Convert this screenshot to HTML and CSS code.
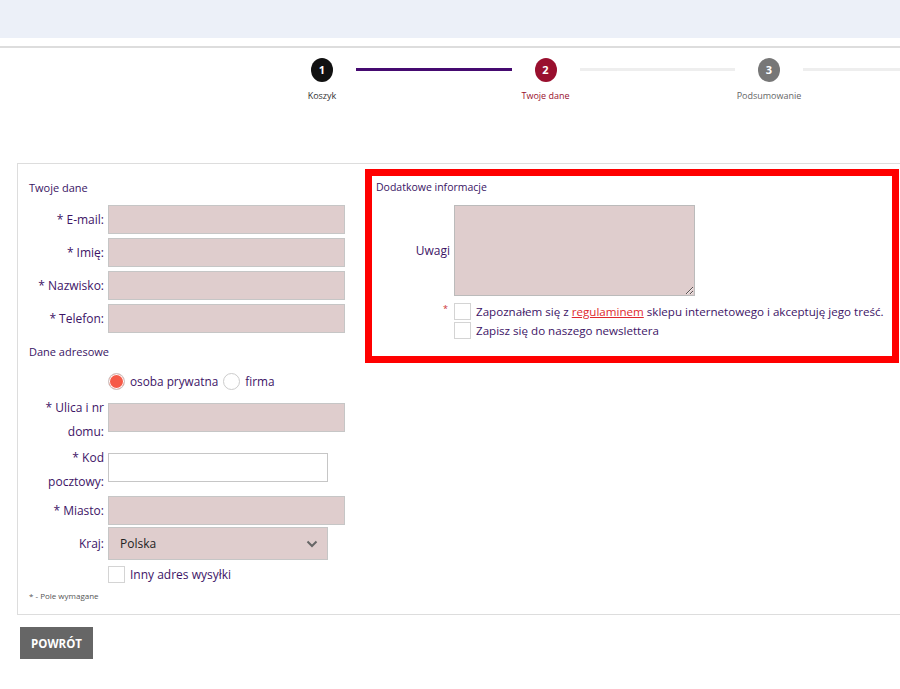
FILE: index.html
```html
<!DOCTYPE html>
<html lang="pl">
<head>
    <meta charset="UTF-8">
    <meta name="viewport" content="width=device-width, initial-scale=1.0">
    <title>Twoje dane</title>
    <link rel="stylesheet" href="styles.css">
</head>
<body>
    <div class="topbar"></div>

    <div class="page">
        <!-- Steps -->
        <div class="steps">
            <div class="step done">
                <span class="step-num">1</span>
                <span class="step-name">Koszyk</span>
            </div>
            <div class="step-line active"></div>
            <div class="step current">
                <span class="step-num">2</span>
                <span class="step-name">Twoje dane</span>
            </div>
            <div class="step-line"></div>
            <div class="step">
                <span class="step-num">3</span>
                <span class="step-name">Podsumowanie</span>
            </div>
            <div class="step-line"></div>
        </div>

        <form class="order-form" onsubmit="return false">
            <div class="form-box">
                <section class="col col-left">
                    <h3 class="col-title">Twoje dane</h3>
                    <div class="fields">
                        <label class="field-label" for="email">* E-mail:</label>
                        <input class="field-input" type="text" id="email">
                        <label class="field-label" for="imie">* Imię:</label>
                        <input class="field-input" type="text" id="imie">
                        <label class="field-label" for="nazwisko">* Nazwisko:</label>
                        <input class="field-input" type="text" id="nazwisko">
                        <label class="field-label" for="telefon">* Telefon:</label>
                        <input class="field-input" type="text" id="telefon">
                    </div>

                    <h3 class="col-title second">Dane adresowe</h3>
                    <div class="radios">
                        <label class="radio-item"><input type="radio" name="typ" checked><span>osoba prywatna</span></label>
                        <label class="radio-item"><input type="radio" name="typ"><span>firma</span></label>
                    </div>

                    <div class="fields address">
                        <label class="field-label" for="ulica">* Ulica i nr domu:</label>
                        <input class="field-input top" type="text" id="ulica">
                        <label class="field-label" for="kod">* Kod pocztowy:</label>
                        <input class="field-input top short white" type="text" id="kod">
                        <label class="field-label" for="miasto">* Miasto:</label>
                        <input class="field-input" type="text" id="miasto">
                        <label class="field-label" for="kraj">Kraj:</label>
                        <div class="select-wrap">
                            <select class="field-select" id="kraj">
                                <option>Polska</option>
                            </select>
                            <svg class="select-arrow" width="12" height="8" viewBox="0 0 12 8">
                                <path d="M1.5 1.5 L6 6 L10.5 1.5" fill="none" stroke="#666" stroke-width="2"/>
                            </svg>
                        </div>
                    </div>

                    <label class="check-item other-address"><input type="checkbox"><span>Inny adres wysyłki</span></label>
                    <p class="required-note">* - Pole wymagane</p>
                </section>

                <section class="col col-right">
                    <h3 class="col-title">Dodatkowe informacje</h3>
                    <div class="fields notes">
                        <label class="field-label" for="uwagi">Uwagi</label>
                        <textarea class="field-textarea" id="uwagi"></textarea>
                    </div>
                    <div class="agree-rows">
                        <span class="agree-star">*</span>
                        <label class="check-item"><input type="checkbox"><span>Zapoznałem się z <a href="#">regulaminem</a> sklepu internetowego i akceptuję jego treść.</span></label>
                        <span></span>
                        <label class="check-item"><input type="checkbox"><span>Zapisz się do naszego newslettera</span></label>
                    </div>
                </section>
            </div>

            <button class="btn-back" type="button">POWRÓT</button>
        </form>
    </div>
</body>
</html>
```

FILE: styles.css
```css
body {
    margin: 0;
    font-family: "Open Sans", Arial, sans-serif;
    color: #3d1466;
    background-color: #fff;
    overflow: hidden;
}

.topbar {
    height: 38px;
    background-color: #ecf0f8;
    border-bottom: 8px solid #fff;
}

.page {
    border-top: 2px solid #ddd;
    overflow: hidden;
}

/* Steps */
.steps {
    display: flex;
    align-items: flex-start;
    margin: 10px 0 0 288px;
    width: 1000px;
}

.step {
    flex: 0 0 68px;
    display: flex;
    flex-direction: column;
    align-items: center;
}

.step-num {
    width: 22px;
    height: 24px;
    border-radius: 50%;
    background-color: #777;
    color: #fff;
    font-size: 11px;
    font-weight: bold;
    line-height: 24px;
    text-align: center;
}

.step-name {
    margin-top: 8px;
    font-size: 9px;
    line-height: 12px;
    color: #666;
    white-space: nowrap;
}

.step.done .step-num {
    background-color: #111;
}

.step.done .step-name {
    color: #333;
}

.step.current .step-num {
    background-color: #990f2e;
}

.step.current .step-name {
    color: #990f2e;
}

.step-line {
    flex: 0 0 155.5px;
    height: 3px;
    margin-top: 10px;
    background-color: #eee;
}

.step-line.active {
    background-color: #450a70;
}

/* Form */
.order-form {
    padding: 0 0 40px 17px;
    margin-top: 61px;
}

.form-box {
    display: flex;
    align-items: flex-start;
    width: 1000px;
    border: 1px solid #ddd;
}

.col-left {
    flex: 0 0 336px;
    padding: 17px 0 13px 11px;
}

.col-right {
    flex: 0 0 512px;
    min-width: 0;
    margin-top: 5px;
    border: 7px solid #f00;
    padding: 4px 4px 17px 4px;
}

.col-title {
    margin: 0 0 10px;
    font-size: 11px;
    line-height: 14px;
    font-weight: normal;
    color: #3a1464;
}

.col-right .col-title {
    font-size: 10.5px;
}

.col-title.second {
    margin-top: 12px;
}

.fields {
    display: grid;
    grid-template-columns: 75px 237px;
    column-gap: 4px;
    row-gap: 4px;
    align-items: center;
}

.fields.address {
    row-gap: 2px;
    margin-top: 4px;
}

.field-label {
    text-align: right;
    font-size: 12px;
    line-height: 24px;
}

.field-input {
    box-sizing: border-box;
    height: 29px;
    width: 100%;
    border: 1px solid #c6c6c6;
    background-color: #dfcdcd;
    font-family: inherit;
}

.field-input.top {
    align-self: start;
    margin-top: 7px;
}

.field-input.short {
    width: 220px;
}

.field-input.white {
    background-color: #fff;
}

.select-wrap {
    position: relative;
    width: 220px;
}

.field-select {
    appearance: none;
    box-sizing: border-box;
    width: 100%;
    height: 33px;
    padding: 0 11px;
    border: 1px solid #c6c6c6;
    background-color: #dfcdcd;
    font-family: inherit;
    font-size: 12px;
    color: #222;
}

.select-arrow {
    position: absolute;
    right: 10px;
    top: 13px;
}

.radios {
    display: flex;
    align-items: center;
    gap: 5px;
    height: 22px;
    margin: 11px 0 0 79px;
    font-size: 11.8px;
}

.radio-item {
    display: flex;
    align-items: center;
    gap: 5px;
}

.radio-item input {
    appearance: none;
    margin: 0;
    width: 17px;
    height: 17px;
    border: 1px solid #ccc;
    border-radius: 50%;
    background-color: #fff;
}

.radio-item input:checked {
    background-color: #f65a48;
    box-shadow: inset 0 0 0 1px #fff;
}

.check-item {
    display: flex;
    align-items: center;
    gap: 5px;
    font-size: 11.6px;
    white-space: nowrap;
}

.check-item input {
    appearance: none;
    flex: 0 0 17px;
    margin: 0;
    width: 17px;
    height: 17px;
    border: 1px solid #d4d4d4;
    background-color: #fff;
}

.check-item a {
    color: #e0292e;
}

.other-address {
    margin: 6px 0 0 79px;
    font-size: 12px;
}

.required-note {
    margin: 7px 0 0;
    font-size: 8px;
    line-height: 11px;
    color: #555;
}

.fields.notes {
    grid-template-columns: 74px 241px;
    margin-top: 11px;
}

.field-textarea {
    box-sizing: border-box;
    width: 241px;
    height: 91px;
    border: 1px solid #bbb;
    background-color: #dfcdcd;
    font-family: inherit;
}

.agree-rows {
    display: grid;
    grid-template-columns: 74px auto;
    column-gap: 4px;
    row-gap: 2px;
    margin-top: 7px;
}

.agree-star {
    text-align: right;
    padding-right: 2px;
    font-size: 9px;
    line-height: 12px;
    color: #c33;
}

.btn-back {
    margin: 12px 0 0 3px;
    width: 73px;
    height: 32px;
    border: none;
    background-color: #666;
    color: #fff;
    font-family: inherit;
    font-size: 11.5px;
    font-weight: bold;
    cursor: pointer;
}
```
